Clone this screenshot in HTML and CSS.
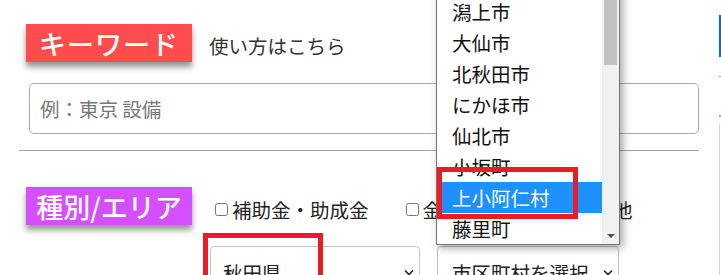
FILE: index.html
```html
<!DOCTYPE html>
<html lang="ja">
<head>
<meta charset="utf-8">
<title>検索</title>
<link rel="stylesheet" href="styles.css">
</head>
<body>
<div class="page">
  <main class="main">
    <div class="row-head">
      <span class="badge badge-red">キーワード</span>
      <a class="howto">使い方はこちら</a>
    </div>
    <input class="kw" type="text" placeholder="例：東京 設備">
    <hr class="divider">
    <div class="row-area">
      <span class="badge badge-purple">種別/エリア</span>
      <div class="area-body">
        <div class="checks">
          <label class="check"><input type="checkbox">補助金・助成金</label>
          <label class="check"><input type="checkbox">金融・融資</label>
          <label class="check"><input type="checkbox">その他</label>
        </div>
        <div class="selects">
          <div class="select select-pref">
            <span>秋田県</span>
            <svg class="chev" width="10" height="7" viewBox="0 0 10 7"><path d="M1 1.5l4 4 4-4" fill="none" stroke="#222" stroke-width="1.6"/></svg>
            <span class="mark mark-pref"></span>
          </div>
          <div class="select select-city">
            <span>市区町村を選択</span>
            <svg class="chev" width="10" height="7" viewBox="0 0 10 7"><path d="M1 1.5l4 4 4-4" fill="none" stroke="#222" stroke-width="1.6"/></svg>
            <div class="dropdown">
              <ul class="dd-list">
                <li class="dd-item">男鹿市</li>
                <li class="dd-item">潟上市</li>
                <li class="dd-item">大仙市</li>
                <li class="dd-item">北秋田市</li>
                <li class="dd-item">にかほ市</li>
                <li class="dd-item">仙北市</li>
                <li class="dd-item">小坂町</li>
                <li class="dd-item sel">上小阿仁村<span class="mark mark-item"></span></li>
                <li class="dd-item">藤里町</li>
              </ul>
              <div class="sb">
                <div class="sb-up"></div>
                <div class="sb-thumb"></div>
                <div class="sb-space"></div>
                <div class="sb-down"><span class="tri"></span></div>
              </div>
            </div>
          </div>
        </div>
      </div>
    </div>
  </main>
  <aside class="side">
    <div class="side-bar"></div>
    <div class="side-dot"></div>
    <div class="side-dot side-dot2"></div>
    <div class="side-box"></div>
  </aside>
</div>
</body>
</html>
```

FILE: styles.css
```css
html, body {
  margin: 0;
  padding: 0;
  background: #fff;
}
body {
  font-family: "Noto Sans CJK JP", "Noto Sans", sans-serif;
  color: #222;
}
.page {
  display: flex;
  width: 721px;
  height: 275px;
  overflow: hidden;
}
.main {
  flex: none;
  width: 680px;
  margin-left: 19px;
  padding-top: 24px;
}
.row-head {
  display: flex;
  align-items: center;
  padding-left: 7px;
}
.badge {
  flex: none;
  width: 166px;
  height: 38px;
  display: flex;
  align-items: center;
  justify-content: center;
  color: #fff;
  font-size: 27px;
  font-weight: 500;
  box-shadow: 0 5px 6px rgba(0, 0, 0, 0.42);
}
.badge-red {
  background: #ff4d4f;
  letter-spacing: 1px;
}
.badge-purple {
  background: #d34fff;
}
.howto {
  margin-left: 17px;
  margin-top: 5px;
  font-size: 19.5px;
  color: #333;
}
.kw {
  display: block;
  box-sizing: border-box;
  margin: 21px 0 0 10px;
  width: 670px;
  height: 51px;
  border: 1px solid #aaa;
  border-radius: 5px;
  padding: 0 10px;
  font: 19.5px "Noto Sans CJK JP", sans-serif;
  color: #222;
  outline: none;
}
.kw::placeholder {
  color: #777;
}
.divider {
  margin: 16px 0 0;
  border: 0;
  border-top: 1px solid #a5a5a5;
  height: 0;
}
.row-area {
  display: flex;
  align-items: flex-start;
  margin-top: 36px;
  padding-left: 7px;
}
.area-body {
  margin-left: 17px;
}
.checks {
  display: flex;
  align-items: center;
  height: 44px;
  font-size: 19.5px;
  white-space: nowrap;
}
.check {
  display: flex;
  align-items: center;
  margin-right: 31px;
}
.check input {
  width: 13px;
  height: 13px;
  margin: 0 4px 0 6px;
}
.selects {
  display: flex;
  gap: 17px;
  margin-top: 15px;
}
.select {
  position: relative;
  box-sizing: border-box;
  height: 52px;
  border: 1px solid #c4c4c4;
  border-radius: 4px;
  display: flex;
  align-items: center;
  justify-content: space-between;
  font-size: 19.5px;
  background: #fff;
}
.select-pref {
  width: 210px;
  margin-left: 1px;
  padding: 0 5px 0 12px;
}
.select-city {
  width: 182px;
  padding: 0 5px 0 14px;
}
.chev {
  display: block;
}
.mark {
  position: absolute;
  box-sizing: border-box;
  border: 5px solid #ed1c24;
}
.mark-pref {
  left: -8px;
  top: -14px;
  width: 120px;
  height: 80px;
}
.dropdown {
  position: absolute;
  left: -2px;
  bottom: calc(100% + 2px);
  box-sizing: border-box;
  width: 184px;
  border: 1px solid #767676;
  background: #fff;
  display: flex;
  box-shadow: 3px 3px 8px rgba(0, 0, 0, 0.35);
  z-index: 2;
}
.dd-list {
  list-style: none;
  margin: 0;
  padding: 0;
  flex: 1;
}
.dd-item {
  height: 31px;
  line-height: 31px;
  padding-left: 15px;
  font-size: 19.5px;
  color: #111;
  white-space: nowrap;
}
.dd-item.sel {
  position: relative;
  background: #1e90ff;
  color: #fff;
}
.mark-item {
  left: 0;
  top: -15px;
  width: 141px;
  height: 52px;
}
.sb {
  flex: none;
  width: 17px;
  background: #f1f1f1;
  display: flex;
  flex-direction: column;
}
.sb-up {
  height: 17px;
}
.sb-thumb {
  margin: 2px 2px 0;
  height: 81px;
  background: #c1c1c1;
}
.sb-space {
  flex: 1;
}
.sb-down {
  height: 17px;
  display: flex;
  align-items: center;
  justify-content: center;
}
.tri {
  width: 0;
  height: 0;
  border-left: 4px solid transparent;
  border-right: 4px solid transparent;
  border-top: 4px solid #505050;
}
.side {
  flex: none;
  width: 2px;
  margin-left: 20px;
  padding-top: 15px;
  display: flex;
  flex-direction: column;
}
.side-bar {
  height: 55px;
  background: #0b68d4;
}
.side-dot {
  margin-top: 19px;
  height: 2px;
  width: 2px;
  background: #7fcc2a;
}
.side-dot2 {
  margin-top: 38px;
}
.side-box {
  margin-top: 7px;
  height: 200px;
  border-left: 1px solid #d5d5d5;
}
```
